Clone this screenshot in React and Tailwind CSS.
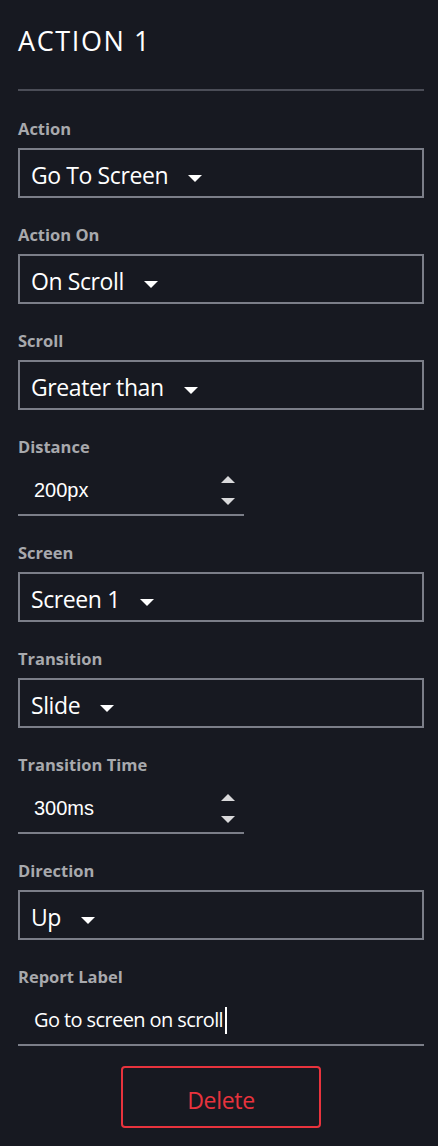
import React from 'react';

const Caret = () => (
    <svg width="14" height="7" viewBox="0 0 14 7" className="ml-5 mt-[11px] shrink-0">
        <polygon points="0,0 14,0 7,7" fill="#ffffff" />
    </svg>
);

const Spinner = () => (
    <div className="flex flex-col items-center gap-[15px]">
        <svg width="14" height="7" viewBox="0 0 14 7">
            <polygon points="7,0 14,7 0,7" fill="#d9d9db" />
        </svg>
        <svg width="14" height="7" viewBox="0 0 14 7">
            <polygon points="0,0 14,0 7,7" fill="#d9d9db" />
        </svg>
    </div>
);

const Label = ({ children }) => (
    <div className="text-[16.5px] font-bold leading-[22px] text-[#a8a9ad]">{children}</div>
);

const SelectField = ({ label, value }) => (
    <div>
        <Label>{label}</Label>
        <div className="mt-[8px] flex h-[50px] items-center border-2 border-[#7b7e88] pl-[11px]">
            <span className="translate-y-[2px] text-[23px] leading-none tracking-[-0.4px] text-white">{value}</span>
            <Caret />
        </div>
    </div>
);

const NumberField = ({ label, value }) => (
    <div>
        <Label>{label}</Label>
        <div className="mt-[8px] flex h-[50px] w-[226px] items-center justify-between border-b-2 border-[#7b7e88] pl-4 pr-[9px]">
            <span className="text-[20px] leading-none text-white" style={{ fontFamily: '"Liberation Sans", Arial, sans-serif' }}>{value}</span>
            <Spinner />
        </div>
    </div>
);

const App = () => {
    const fields = [
        { type: 'select', label: 'Action', value: 'Go To Screen' },
        { type: 'select', label: 'Action On', value: 'On Scroll' },
        { type: 'select', label: 'Scroll', value: 'Greater than' },
        { type: 'number', label: 'Distance', value: '200px' },
        { type: 'select', label: 'Screen', value: 'Screen 1' },
        { type: 'select', label: 'Transition', value: 'Slide' },
        { type: 'number', label: 'Transition Time', value: '300ms' },
        { type: 'select', label: 'Direction', value: 'Up' },
    ];

    return (
        <div className="min-h-screen bg-[#171921] pl-[18px] pr-[14px] pt-[25px]" style={{ fontFamily: '"Open Sans", "Noto Sans", sans-serif' }}>
            <h1 className="text-[27px] font-normal leading-[32px] tracking-[1.6px] text-white">ACTION 1</h1>
            <div className="mt-[32px] h-[2px] bg-[#4b4d57]" />

            <div className="mt-[27px] flex flex-col gap-[26px]">
                {fields.map(f => f.type === 'select'
                    ? <SelectField key={f.label} label={f.label} value={f.value} />
                    : <NumberField key={f.label} label={f.label} value={f.value} />
                )}

                <div>
                    <Label>Report Label</Label>
                    <div className="mt-[8px] flex h-[50px] items-center border-b-2 border-[#7b7e88] pl-4">
                        <span className="text-[20px] leading-none tracking-[-0.6px] text-white">Go to screen on scroll</span>
                        <span className="ml-[2px] h-[27px] w-[2px] bg-white" />
                    </div>
                </div>
            </div>

            <div className="mt-[20px] flex justify-center pb-[17px]">
                <button className="h-[62px] w-[200px] rounded-[4px] border-2 border-[#e8333d] pt-[6px] text-[23px] tracking-[-0.3px] text-[#e8333d]">
                    Delete
                </button>
            </div>
        </div>
    );
};

export default App;
